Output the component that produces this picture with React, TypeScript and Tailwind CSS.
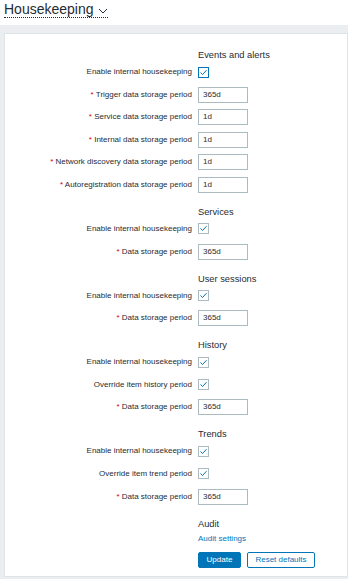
import React from 'react';

type Field =
  | { kind: 'check'; label: string; focused?: boolean }
  | { kind: 'input'; label: string; value: string };

interface Section {
  title: string;
  fields: Field[];
}

const sections: Section[] = [
  {
    title: 'Events and alerts',
    fields: [
      { kind: 'check', label: 'Enable internal housekeeping', focused: true },
      { kind: 'input', label: 'Trigger data storage period', value: '365d' },
      { kind: 'input', label: 'Service data storage period', value: '1d' },
      { kind: 'input', label: 'Internal data storage period', value: '1d' },
      { kind: 'input', label: 'Network discovery data storage period', value: '1d' },
      { kind: 'input', label: 'Autoregistration data storage period', value: '1d' },
    ],
  },
  {
    title: 'Services',
    fields: [
      { kind: 'check', label: 'Enable internal housekeeping' },
      { kind: 'input', label: 'Data storage period', value: '365d' },
    ],
  },
  {
    title: 'User sessions',
    fields: [
      { kind: 'check', label: 'Enable internal housekeeping' },
      { kind: 'input', label: 'Data storage period', value: '365d' },
    ],
  },
  {
    title: 'History',
    fields: [
      { kind: 'check', label: 'Enable internal housekeeping' },
      { kind: 'check', label: 'Override item history period' },
      { kind: 'input', label: 'Data storage period', value: '365d' },
    ],
  },
  {
    title: 'Trends',
    fields: [
      { kind: 'check', label: 'Enable internal housekeeping' },
      { kind: 'check', label: 'Override item trend period' },
      { kind: 'input', label: 'Data storage period', value: '365d' },
    ],
  },
];

function Checkbox({ focused }: { focused?: boolean }) {
  return (
    <span
      className={`flex items-center justify-center w-[11px] h-[11px] bg-white border ${
        focused ? 'border-[#0275b8]' : 'border-[#acbbc2]'
      }`}
    >
      <svg width="9" height="9" viewBox="0 0 9 9">
        <polyline points="1.5,4.5 3.5,6.5 7.5,2.2" fill="none" stroke="#0275b8" strokeWidth="1" />
      </svg>
    </span>
  );
}

function FieldRow({ field }: { field: Field }) {
  return (
    <div className="flex items-center h-[16px]">
      <div className="w-[187px] text-right text-[8px] leading-[10px] text-[#1f2c33] whitespace-nowrap">
        {field.kind === 'input' && <span className="text-[#d40000]">* </span>}
        {field.label}
      </div>
      <div className="ml-[6px] flex items-center">
        {field.kind === 'check' ? (
          <Checkbox focused={field.focused} />
        ) : (
          <div className="w-[50px] h-[16px] border border-[#acbbc2] bg-white px-[4px] flex items-center text-[8px] text-[#1f2c33]">
            {field.value}
          </div>
        )}
      </div>
    </div>
  );
}

function SectionTitle({ children }: { children: React.ReactNode }) {
  return (
    <div className="pl-[193px] h-[12px] leading-[12px] text-[9.3px] text-[#1f2c33]">{children}</div>
  );
}

export default function App() {
  return (
    <div className="w-[348px] h-[579px] bg-white font-['Liberation_Sans',Arial,sans-serif] overflow-hidden">
      <header className="h-[25px] pl-[4px] pt-[1px] flex items-start">
        <div className="flex items-center border-b border-dotted border-[#1f2c33] h-[17px]">
          <span className="text-[14px] leading-[16px] text-[#1f2c33]">Housekeeping</span>
          <svg width="10" height="6" viewBox="0 0 10 6" className="ml-[4px] mt-[4px]">
            <polyline points="1,1 5,5 9,1" fill="none" stroke="#1f2c33" strokeWidth="1" />
          </svg>
        </div>
      </header>
      <main className="bg-[#ebeef0] h-[554px] pt-[8px] pl-[4px]">
        <div className="bg-white border border-[#dfe4e7] h-[544px] pt-[15px]">
          {sections.map((section, i) => (
            <div key={section.title} className={i > 0 ? 'mt-[13px]' : ''}>
              <SectionTitle>{section.title}</SectionTitle>
              <div className="mt-[3px] flex flex-col gap-[6.6px]">
                {section.fields.map((f, j) => (
                  <FieldRow key={j} field={f} />
                ))}
              </div>
            </div>
          ))}
          <div className="mt-[13px]">
            <SectionTitle>Audit</SectionTitle>
            <div className="pl-[193px] mt-[4px] h-[10px] leading-[10px] text-[8px] text-[#0275b8]">
              Audit settings
            </div>
            <div className="pl-[193px] mt-[8px] flex gap-[6px]">
              <button className="h-[16px] w-[43px] bg-[#0275b8] text-white text-[8px] rounded-[2px] border border-[#0275b8]">
                Update
              </button>
              <button className="h-[16px] w-[68px] bg-white text-[#0275b8] text-[8px] rounded-[2px] border border-[#0275b8]">
                Reset defaults
              </button>
            </div>
          </div>
        </div>
      </main>
    </div>
  );
}
